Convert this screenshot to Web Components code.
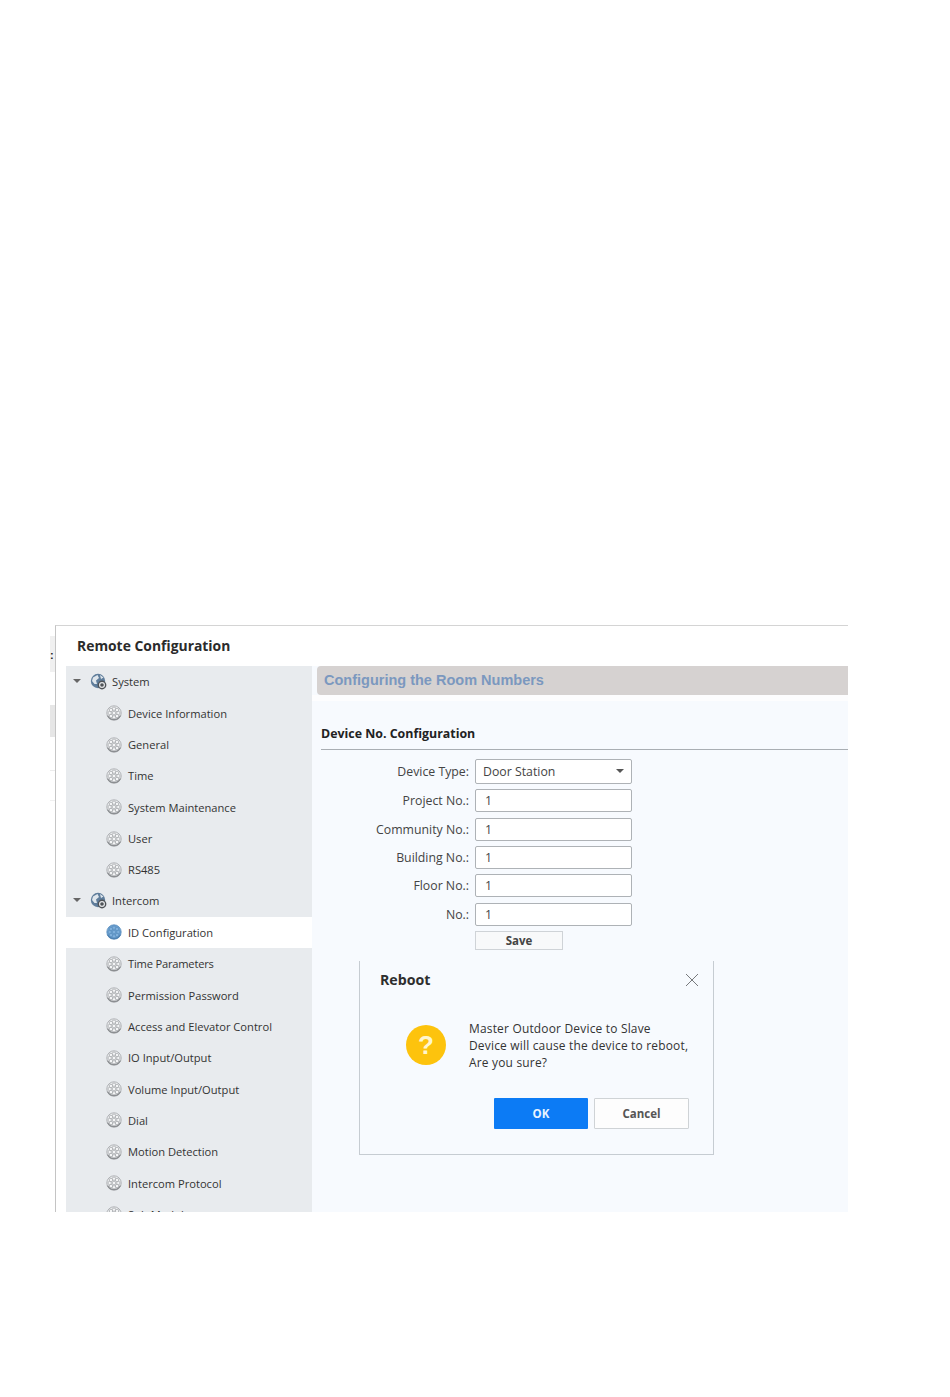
<!DOCTYPE html>
<html>
<head>
<meta charset="utf-8">
<title>Remote Configuration</title>
<style>
  html, body { margin: 0; background: #fff; }
  body { padding: 625px 0 0 50px; height: 772px; box-sizing: content-box; font-family: "Open Sans", sans-serif; }
</style>
</head>
<body>
<config-window>
  <config-tree slot="tree">
    <tree-group label="System">
      <tree-item>Device Information</tree-item>
      <tree-item>General</tree-item>
      <tree-item>Time</tree-item>
      <tree-item>System Maintenance</tree-item>
      <tree-item>User</tree-item>
      <tree-item>RS485</tree-item>
    </tree-group>
    <tree-group label="Intercom">
      <tree-item active>ID Configuration</tree-item>
      <tree-item style="letter-spacing:-.2px">Time Parameters</tree-item>
      <tree-item>Permission Password</tree-item>
      <tree-item>Access and Elevator Control</tree-item>
      <tree-item>IO Input/Output</tree-item>
      <tree-item>Volume Input/Output</tree-item>
      <tree-item>Dial</tree-item>
      <tree-item>Motion Detection</tree-item>
      <tree-item>Intercom Protocol</tree-item>
      <tree-item>Sub Module</tree-item>
    </tree-group>
  </config-tree>
  <config-panel slot="panel">
    <form-row label="Device Type:" select>Door Station</form-row>
    <form-row label="Project No.:">1</form-row>
    <form-row label="Community No.:">1</form-row>
    <form-row label="Building No.:">1</form-row>
    <form-row label="Floor No.:">1</form-row>
    <form-row label="No.:">1</form-row>
    <reboot-dialog slot="dialog"></reboot-dialog>
  </config-panel>
</config-window>

<script>
// ring of small petals around a hub, used for every leaf of the tree
const flowerIcon = (disc, edge, petal, shade) => {
  let petals = "";
  for (let i = 0; i < 8; i++) {
    const a = i * Math.PI / 4;
    const x = (8 + 4.3 * Math.cos(a)).toFixed(2);
    const y = (8 + 4.3 * Math.sin(a)).toFixed(2);
    petals += `<circle cx="${x}" cy="${y}" r="1.7"/>`;
  }
  return /* html */`
  <svg width="16" height="16" viewBox="0 0 16 16">
    <circle cx="8" cy="8" r="7.2" fill="${disc}" stroke="${edge}" stroke-width=".8"/>
    <g fill="${petal}" stroke="${edge}" stroke-width=".7">${petals}<circle cx="8" cy="8" r="1.8"/></g>
    <path d="M1.6 10.5a7 7 0 0 0 12.8 0" fill="none" stroke="${shade}" stroke-width="1.3"/>
  </svg>`;
};

class ConfigWindow extends HTMLElement {
  constructor() {
    super();
    this.attachShadow({ mode: "open" });
    this.shadowRoot.innerHTML = /* html */`
    <style>
      :host { display: flex; width: 798px; height: 587px; }
      .edge { width: 5px; flex: none; display: flex; flex-direction: column; }
      .edge i { display: block; background: #f0f0f0; }
      .edge .a { height: 11px; background: #fff; }
      .edge .b { height: 36px; position: relative; }
      .edge .b::after { content: ":"; position: absolute; left: 0; top: 12px; font: bold 11px/14px "Liberation Sans", sans-serif; color: #222; }
      .edge .c { height: 33px; background: #fff; }
      .edge .d { height: 32px; background: #e6e6e6; }
      .edge .e { height: 33px; background: #fff; border-bottom: 1px solid #ececec; }
      .edge .f { height: 29px; background: #fff; border-bottom: 1px solid #f0f0f0; }
      .main { flex: 1; border-left: 1px solid #c4c4c4; border-top: 1px solid #d4d4d4; display: flex; flex-direction: column; min-width: 0; }
      h1 { margin: 0; height: 40px; padding-left: 21px; font: 700 13.9px/40px "Open Sans", sans-serif; color: #2b2b2b; }
      .body { flex: 1; display: flex; min-height: 0; padding-left: 10px; }
      .tree { width: 246px; flex: none; overflow: hidden; }
      .panel { flex: 1; min-width: 0; background: #f7fafe; padding-left: 5px; }
    </style>
    <div class="edge"><i class="a"></i><i class="b"></i><i class="c"></i><i class="d"></i><i class="e"></i><i class="f"></i></div>
    <div class="main">
      <h1>Remote Configuration</h1>
      <div class="body">
        <div class="tree"><slot name="tree"></slot></div>
        <div class="panel"><slot name="panel"></slot></div>
      </div>
    </div>`;
  }
}

class ConfigTree extends HTMLElement {
  constructor() {
    super();
    this.attachShadow({ mode: "open" });
    this.shadowRoot.innerHTML = /* html */`
    <style>
      :host { display: block; background: #e8ebee; height: 100%; }
    </style>
    <slot></slot>`;
  }
}

class TreeGroup extends HTMLElement {
  constructor() {
    super();
    this.attachShadow({ mode: "open" });
  }

  connectedCallback() {
    this.shadowRoot.innerHTML = /* html */`
    <style>
      :host { display: block; }
      .head { height: 31.3px; display: flex; align-items: center; font: 11.2px "Open Sans", sans-serif; color: #333; }
      .arrow { width: 0; height: 0; margin: 0 0 2px 7px; border: 4px solid transparent; border-top: 4px solid #666; border-bottom: 0; }
      svg { margin-left: 9px; margin-right: 5px; }
    </style>
    <div class="head">
      <span class="arrow"></span>
      <svg width="17" height="17" viewBox="0 0 17 17">
        <circle cx="8" cy="8" r="7.2" fill="#5f7d9b"/>
        <path d="M3 4.5 7.5 2 9 5 6 7.5 7 11 4.5 11 2 8ZM10 2l3.5 2.5L11 6Z" fill="#dfe6ec"/>
        <circle cx="12" cy="12" r="4.4" fill="#4f5357"/>
        <circle cx="12" cy="12" r="2.4" fill="none" stroke="#e6e8ea" stroke-width="1.2"/>
      </svg>
      <span>${this.getAttribute("label")}</span>
    </div>
    <slot></slot>`;
  }
}

class TreeItem extends HTMLElement {
  constructor() {
    super();
    this.attachShadow({ mode: "open" });
  }

  connectedCallback() {
    const icon = this.hasAttribute("active")
      ? flowerIcon("#6a9fd0", "#5b8fbf", "#7fb0dc", "#4f82b2")
      : flowerIcon("#eceef0", "#a2a5a8", "#f4f5f6", "#8b8e91");
    this.shadowRoot.innerHTML = /* html */`
    <style>
      :host { display: flex; align-items: center; box-sizing: border-box; height: 31.33px; padding: .5px 0 0 40px; font: 11.15px "Open Sans", sans-serif; color: #333; }
      :host([active]) { background: #fff; }
      svg { margin-right: 6px; flex: none; }
    </style>
    ${icon}<slot></slot>`;
  }
}

class ConfigPanel extends HTMLElement {
  constructor() {
    super();
    this.attachShadow({ mode: "open" });
    this.shadowRoot.innerHTML = /* html */`
    <style>
      :host { display: block; font: 12px "Open Sans", sans-serif; color: #333; }
      .title { height: 29px; background: #d6d2d1; border-radius: 4px 0 0 4px; padding-left: 7px; font: 700 14.5px/28px "Liberation Sans", sans-serif; color: #7b98bf; }
      .strip { height: 6px; margin-left: -5px; background: #fdfdfe; }
      h2 { margin: 21px 0 0 4px; height: 27px; border-bottom: 1px solid #a9aeb3; font: 700 12.4px/24px "Open Sans", sans-serif; color: #222; }
      .form { padding-top: 8.8px; display: flex; flex-direction: column; gap: 5.4px; }
      .save { margin: 0 0 0 158px; width: 88px; height: 19px; box-sizing: border-box; display: block; padding: 0; background: #f8f9fa; border: 1px solid #cfd3d7; font: 700 11.5px/17px "Open Sans", sans-serif; color: #444; }
    </style>
    <div class="title">Configuring the Room Numbers</div>
    <div class="strip"></div>
    <h2>Device No. Configuration</h2>
    <div class="form">
      <slot></slot>
      <button class="save">Save</button>
    </div>
    <slot name="dialog"></slot>`;
  }
}

class FormRow extends HTMLElement {
  constructor() {
    super();
    this.attachShadow({ mode: "open" });
  }

  connectedCallback() {
    const select = this.hasAttribute("select");
    this.shadowRoot.innerHTML = /* html */`
    <style>
      :host { display: flex; align-items: center; gap: 6px; height: ${select ? 25 : 23}px; font: 12.3px "Open Sans", sans-serif; color: #444; }
      label { width: 152px; text-align: right; }
      .box { width: 157px; height: 100%; box-sizing: border-box; display: flex; align-items: center; justify-content: space-between; background: #fff; border: 1px solid #aeb2b6; border-radius: 2px; padding: 0 ${select ? "7px" : "0"} 0 ${select ? "7px" : "9px"}; }
      .caret { width: 0; height: 0; border: 4.5px solid transparent; border-top: 4px solid #555; border-bottom: 0; }
    </style>
    <label>${this.getAttribute("label")}</label>
    <div class="box"><span><slot></slot></span>${select ? '<i class="caret"></i>' : ""}</div>`;
  }
}

class RebootDialog extends HTMLElement {
  constructor() {
    super();
    this.attachShadow({ mode: "open" });
    this.shadowRoot.innerHTML = /* html */`
    <style>
      :host { display: block; width: 355px; height: 194px; box-sizing: border-box; margin: 10.8px 0 0 42px; border: 1px solid #c6ccd2; border-top: 0; font: 12px "Open Sans", sans-serif; color: #333; }
      .head { display: flex; justify-content: space-between; align-items: center; padding: 9px 14px 0 20px; }
      h3 { margin: 0; font: 700 14.2px/20px "Open Sans", sans-serif; color: #2e2e2e; }
      .msg { display: flex; align-items: center; gap: 23px; padding: 30px 0 0 46px; }
      .q { width: 40px; height: 40px; border-radius: 50%; background: #fdc30d; color: #fff6cf; display: flex; align-items: center; justify-content: center; font: 700 26px "Liberation Sans", sans-serif; flex: none; }
      p { margin: 0; font-size: 11.95px; line-height: 17px; letter-spacing: .2px; }
      .actions { display: flex; gap: 6px; padding: 27px 0 0 134px; }
      button { width: 95px; height: 31px; padding: 0; box-sizing: border-box; border-radius: 1px; font: 700 11.5px "Open Sans", sans-serif; }
      .ok { width: 94px; background: #0c7bf5; border: 0; color: #e8f4ff; }
      .cancel { background: #fdfdfd; border: 1px solid #cfd3d6; color: #555; }
    </style>
    <div class="head">
      <h3>Reboot</h3>
      <svg width="14" height="14" viewBox="0 0 14 14"><path d="M1 1l12 12M13 1 1 13" stroke="#77797c" stroke-width="1" fill="none"/></svg>
    </div>
    <div class="msg">
      <div class="q">?</div>
      <p>Master Outdoor Device to Slave<br>Device will cause the device to reboot,<br>Are you sure?</p>
    </div>
    <div class="actions">
      <button class="ok">OK</button>
      <button class="cancel">Cancel</button>
    </div>`;
  }
}

customElements.define("config-window", ConfigWindow);
customElements.define("config-tree", ConfigTree);
customElements.define("tree-group", TreeGroup);
customElements.define("tree-item", TreeItem);
customElements.define("config-panel", ConfigPanel);
customElements.define("form-row", FormRow);
customElements.define("reboot-dialog", RebootDialog);
</script>
</body>
</html>
